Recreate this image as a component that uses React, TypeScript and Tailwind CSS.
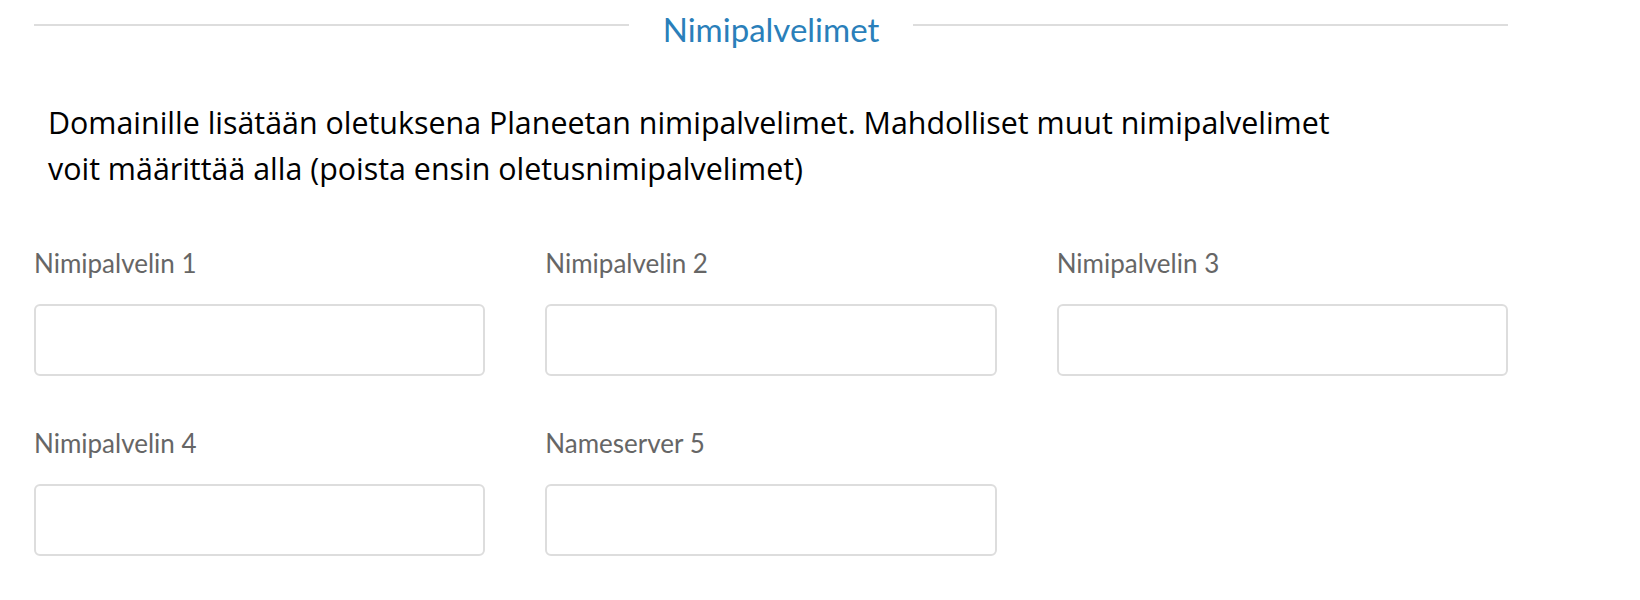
import React from 'react';

const fields = ['Nimipalvelin 1', 'Nimipalvelin 2', 'Nimipalvelin 3', 'Nimipalvelin 4', 'Nameserver 5'];

const NameserverField = ({ label }: { label: string }) => {
  return (
    <div className="flex flex-col">
      <label className="text-[26px] leading-[36px] text-[#666] mb-[23px] font-['Lato',sans-serif]">
        {label}
      </label>
      <input
        type="text"
        className="h-[72px] w-full rounded-[6px] border-2 border-[#dddddd] bg-white px-4 text-[26px] outline-none"
      />
    </div>
  );
};

const App = () => {
  return (
    <div className="min-h-[600px] bg-white">
      <div className="w-[1474px] ml-[34px]">
        <div className="flex items-start pt-[10px]">
          <div className="flex-1 h-[2px] mt-[14px] bg-[#dddddd]"></div>
          <h2 className="px-[34px] text-[33px] leading-[38px] text-[#2a7fba] font-['Lato',sans-serif]">
            Nimipalvelimet
          </h2>
          <div className="flex-1 h-[2px] mt-[14px] bg-[#dddddd]"></div>
        </div>

        <p className="mt-[52px] pl-[14px] max-w-[1330px] text-[30.4px] leading-[46px] text-black font-['Open_Sans',sans-serif]">
          Domainille lisätään oletuksena Planeetan nimipalvelimet. Mahdolliset muut nimipalvelimet voit määrittää alla (poista ensin oletusnimipalvelimet)
        </p>

        <div className="mt-[53px] grid grid-cols-3 gap-x-[60px] gap-y-[49px]">
          {fields.map((f) => (
            <NameserverField key={f} label={f} />
          ))}
        </div>
      </div>
    </div>
  );
};

export default App;
